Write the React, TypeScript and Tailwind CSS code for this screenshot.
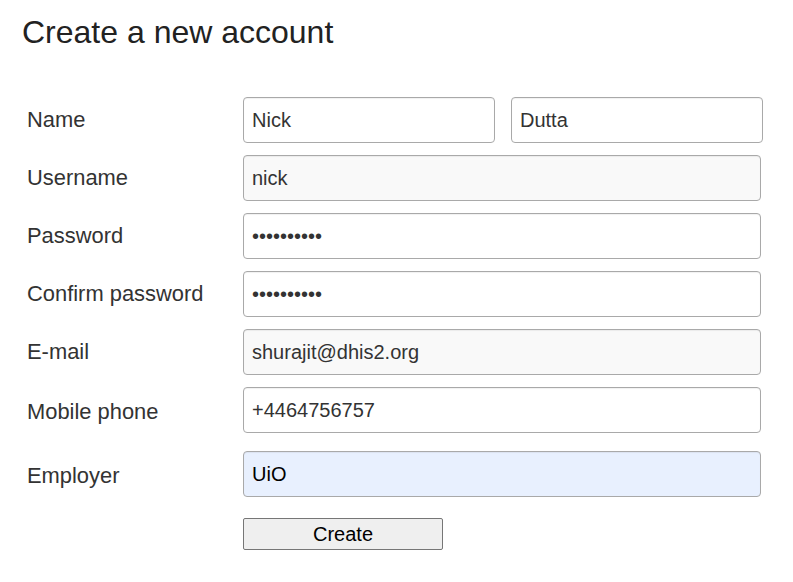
import React from "react";

const inputBase =
	"h-[46px] w-full rounded-[4px] border border-[#a9a9a9] px-[8px] text-[20px] text-[#333] shadow-[inset_0_1px_1px_rgba(0,0,0,0.06)] outline-none";

function Row({
	label,
	labelClassName,
	className,
	children,
}: {
	label: string;
	labelClassName?: string;
	className?: string;
	children: React.ReactNode;
}) {
	return (
		<div className={`flex items-center ${className ?? ""}`}>
			<label className={`w-[216px] shrink-0 text-[21.9px] text-[#333] ${labelClassName ?? ""}`}>
				{label}
			</label>
			<div className="flex w-[520px] gap-[16px]">{children}</div>
		</div>
	);
}

export default function App() {
	return (
		<div className="min-h-[582px] w-[793px] bg-white font-['Liberation_Sans',Arial,sans-serif]">
			<h1 className="pl-[22px] pt-[14px] text-[32px] leading-[37px] text-[#222]">
				Create a new account
			</h1>

			<form className="mt-[46px] flex flex-col pl-[27px]" onSubmit={(e) => e.preventDefault()}>
				<Row label="Name">
					<input className={`${inputBase} bg-white`} defaultValue="Nick" />
					<input className={`${inputBase} bg-white`} defaultValue="Dutta" />
				</Row>

				<Row label="Username" className="mt-[12px]">
					<input className={`${inputBase} mr-[2px] bg-[#f9f9f9]`} defaultValue="nick" readOnly />
				</Row>

				<Row label="Password" className="mt-[12px]">
					<input type="password" className={`${inputBase} mr-[2px] bg-white`} defaultValue="nickdutta1" />
				</Row>

				<Row label="Confirm password" className="mt-[12px]">
					<input type="password" className={`${inputBase} mr-[2px] bg-white`} defaultValue="nickdutta1" />
				</Row>

				<Row label="E-mail" className="mt-[12px]">
					<input className={`${inputBase} mr-[2px] bg-[#f9f9f9]`} defaultValue="shurajit@dhis2.org" readOnly />
				</Row>

				<Row label="Mobile phone" className="mt-[12px]" labelClassName="pt-[4px]">
					<input className={`${inputBase} mr-[2px] bg-white`} defaultValue="+4464756757" />
				</Row>

				<Row label="Employer" className="mt-[18px]" labelClassName="pt-[4px]">
					<input className={`${inputBase} mr-[2px] bg-[#e8f0fe] text-black`} defaultValue="UiO" />
				</Row>

				<div className="mt-[21px] flex">
					<div className="w-[216px] shrink-0" />
					<button
						type="submit"
						className="h-[32px] w-[200px] rounded-[2px] border border-[#767676] bg-[#efefef] text-[20px] text-black"
					>
						Create
					</button>
				</div>
			</form>
		</div>
	);
}
